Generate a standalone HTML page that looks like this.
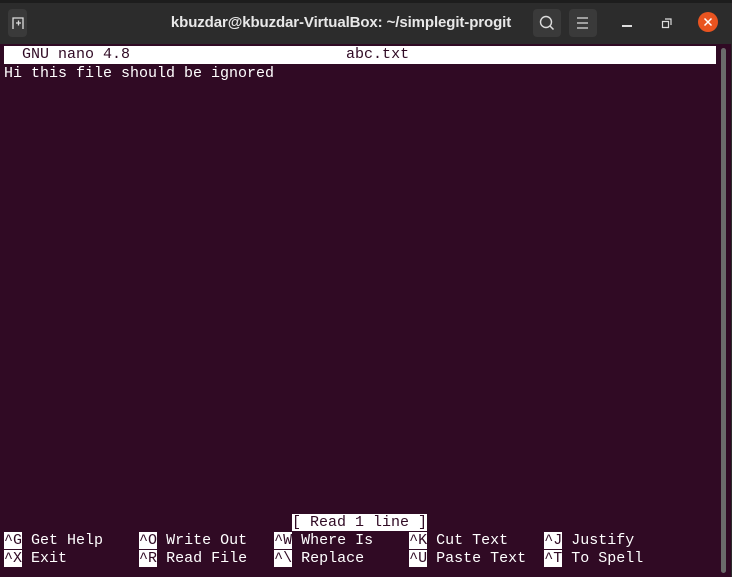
<!DOCTYPE html>
<html><head><meta charset="utf-8"><style>
*{margin:0;padding:0;box-sizing:border-box}
body{width:732px;height:577px;overflow:hidden;background:#2c2c2c;position:relative;font-family:"Liberation Sans",sans-serif}
.top{position:absolute;left:0;top:0;width:732px;height:3px;background:#1d1d1d}
.tb{position:absolute;left:0;top:3px;width:732px;height:41px;background:#2c2c2c}
.btn{position:absolute;top:9px;height:28px;background:#3a3a3a;border-radius:4px}
.title{position:absolute;left:0;width:682px;top:14px;text-align:center;color:#e8e8e8;font-weight:bold;font-size:15px;letter-spacing:-0.1px;white-space:nowrap}
.term{position:absolute;left:0;top:44px;width:731px;height:533px;background:#300a24}
.mono{font-family:"Liberation Mono",monospace;font-size:15px;line-height:18px;white-space:pre;color:#fff;position:absolute;left:4px}
.inv{background:#fff;color:#300a24}
.sb{position:absolute;left:721px;top:4px;width:5px;height:525px;background:#6b6b6b;border-radius:3px}
</style></head><body>
<div class="top"></div><div class="tb"></div>
<div class="btn" style="left:8px;width:19px"></div>
<svg style="position:absolute;left:10px;top:15px" width="16" height="16"><path d="M3 14V3h10v11M6 8h5M8.5 5.5v5" stroke="#ddd" stroke-width="1.3" fill="none"/></svg>
<div class="title">kbuzdar@kbuzdar-VirtualBox: ~/simplegit-progit</div>
<div class="btn" style="left:533px;width:28px"></div>
<svg style="position:absolute;left:538px;top:14px" width="18" height="18"><circle cx="8" cy="8" r="5.5" stroke="#ddd" stroke-width="1.4" fill="none"/><path d="M12 12l3.5 3.5" stroke="#ddd" stroke-width="1.5"/></svg>
<div class="btn" style="left:569px;width:28px"></div>
<svg style="position:absolute;left:575px;top:15px" width="16" height="16"><path d="M2 3h11M2 8h11M2 13h11" stroke="#ddd" stroke-width="1.3"/></svg>
<div style="position:absolute;left:622px;top:25px;width:10px;height:1.5px;background:#ddd"></div>
<svg style="position:absolute;left:660px;top:16px" width="14" height="14"><path d="M2.5 5.5h6v6h-6z M5 3h6v6" stroke="#ddd" stroke-width="1.2" fill="none"/></svg>
<div style="position:absolute;left:698px;top:12px;width:20px;height:20px;border-radius:50%;background:#e95420"></div>
<svg style="position:absolute;left:703px;top:17px" width="10" height="10"><path d="M1.5 1.5l7 7M8.5 1.5l-7 7" stroke="#fff" stroke-width="1.5"/></svg>
<div class="term">
<div class="sb"></div>
<div class="mono inv" style="top:2px;width:712px">  GNU nano 4.8                        abc.txt</div>
<div class="mono" style="top:21px">Hi this file should be ignored</div>
<div class="mono" style="top:470px;left:292px"><span class="inv">[ Read 1 line ]</span></div>
<div class="mono" style="top:488px"><span class="inv">^G</span> Get Help    <span class="inv">^O</span> Write Out   <span class="inv">^W</span> Where Is    <span class="inv">^K</span> Cut Text    <span class="inv">^J</span> Justify</div>
<div class="mono" style="top:506px"><span class="inv">^X</span> Exit        <span class="inv">^R</span> Read File   <span class="inv">^\</span> Replace     <span class="inv">^U</span> Paste Text  <span class="inv">^T</span> To Spell</div>
</div>
</body></html>
